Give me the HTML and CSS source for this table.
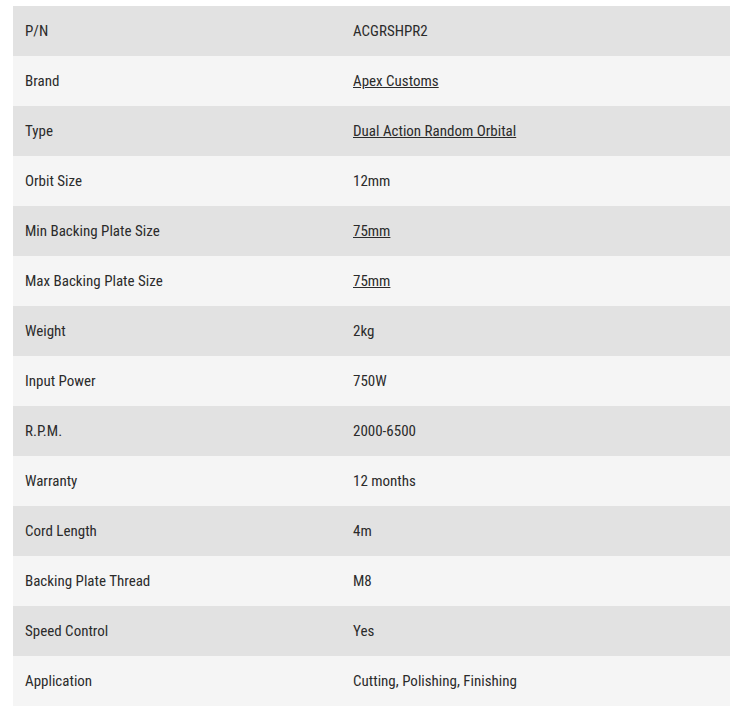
FILE: index.html
```html
<!DOCTYPE html>
<html>
<head>
<meta charset="utf-8">
<link rel="stylesheet" href="styles.css">
</head>
<body>
<table class="specs">
<colgroup><col class="col-label"><col class="col-value"></colgroup>
<tbody>
<tr><td>P/N</td><td>ACGRSHPR2</td></tr>
<tr><td>Brand</td><td><a href="#">Apex Customs</a></td></tr>
<tr><td>Type</td><td><a href="#">Dual Action Random Orbital</a></td></tr>
<tr><td>Orbit Size</td><td>12mm</td></tr>
<tr><td>Min Backing Plate Size</td><td><a href="#">75mm</a></td></tr>
<tr><td>Max Backing Plate Size</td><td><a href="#">75mm</a></td></tr>
<tr><td>Weight</td><td>2kg</td></tr>
<tr><td>Input Power</td><td>750W</td></tr>
<tr><td>R.P.M.</td><td>2000-6500</td></tr>
<tr><td>Warranty</td><td>12 months</td></tr>
<tr><td>Cord Length</td><td>4m</td></tr>
<tr><td>Backing Plate Thread</td><td>M8</td></tr>
<tr><td>Speed Control</td><td>Yes</td></tr>
<tr><td>Application</td><td>Cutting, Polishing, Finishing</td></tr>
</tbody>
</table>
</body>
</html>
```
FILE: styles.css
```css
html, body {
  margin: 0;
  padding: 0;
  background: #ffffff;
}
body {
  padding: 6px 11px 0 13px;
  font-family: Roboto, "Liberation Sans", sans-serif;
  font-stretch: 82%;
  font-size: 15px;
  color: #2b2b2b;
}
.specs {
  width: 717px;
  border-collapse: collapse;
  table-layout: fixed;
}
.col-label {
  width: 328px;
}
.specs tr {
  height: 50px;
}
.specs tr:nth-child(odd) {
  background: #e2e2e2;
}
.specs tr:nth-child(even) {
  background: #f5f5f5;
}
.specs td {
  padding: 0 12px;
  vertical-align: middle;
  line-height: 20px;
}
.specs a {
  color: #2b2b2b;
  text-decoration: underline;
}
```
